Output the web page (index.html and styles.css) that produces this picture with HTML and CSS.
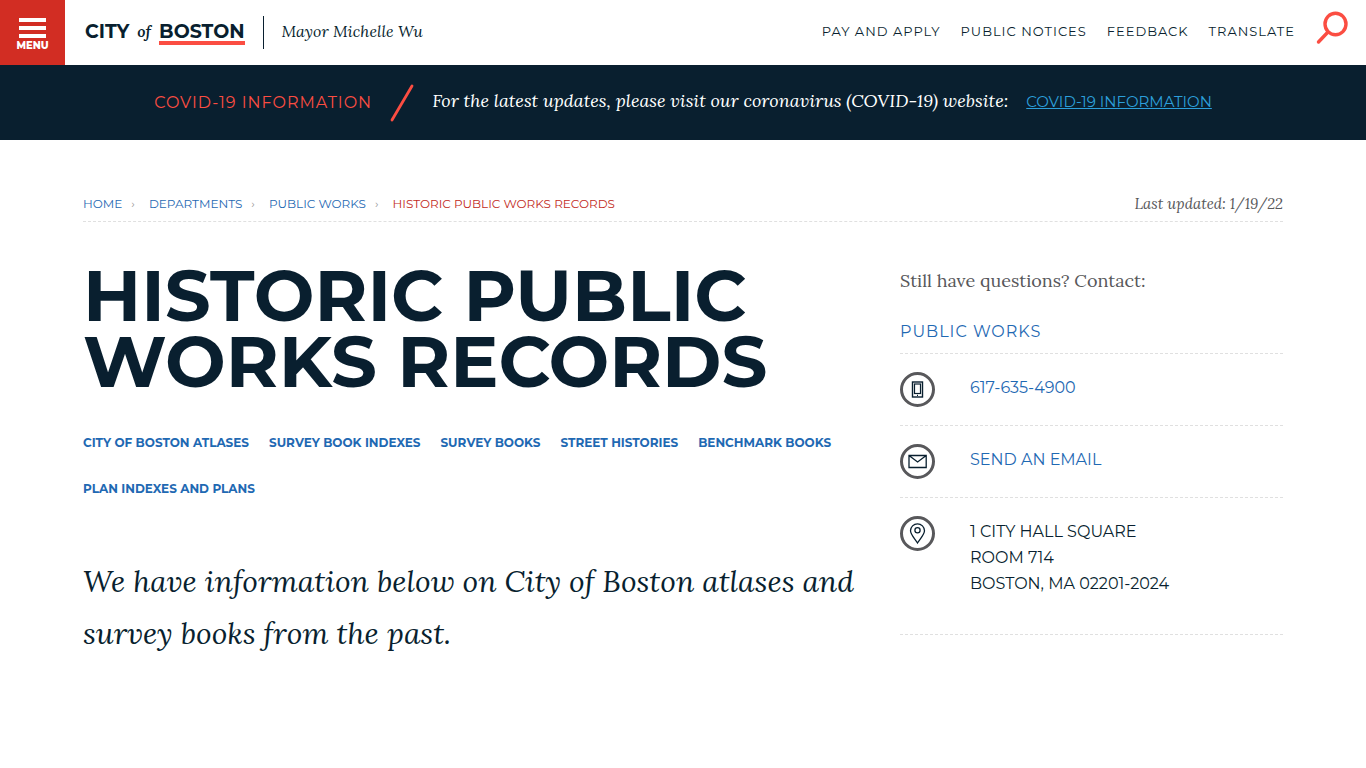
FILE: index.html
```html
<!DOCTYPE html>
<html lang="en">
<head>
<meta charset="utf-8">
<meta name="viewport" content="width=device-width, initial-scale=1">
<title>Historic Public Works Records | Boston.gov</title>
<link rel="stylesheet" href="styles.css">
</head>
<body>
<header class="header">
  <button class="menu" type="button">
    <span class="menu-bar"></span><span class="menu-bar"></span><span class="menu-bar"></span>
    <span class="menu-label">MENU</span>
  </button>
  <a class="logo" href="#"><span>CITY</span><i class="logo-of">of</i><span class="logo-boston">BOSTON</span></a>
  <span class="mayor">Mayor Michelle Wu</span>
  <nav class="topnav" aria-label="Main">
    <a href="#">PAY AND APPLY</a>
    <a href="#">PUBLIC NOTICES</a>
    <a href="#">FEEDBACK</a>
    <a href="#">TRANSLATE</a>
  </nav>
  <button class="search" type="button" aria-label="Search">
    <svg width="34" height="34" viewBox="0 0 34 34" fill="none" stroke="#fb4d42" stroke-linecap="round"><ellipse cx="19.500" cy="13" rx="10.500" ry="10.700" stroke-width="3.400"/><path d="M12 21 2.500 31" stroke-width="3.400"/></svg>
  </button>
</header>

<section class="banner">
  <span class="banner-title">COVID-19 INFORMATION</span>
  <svg class="banner-slash" width="24" height="38" viewBox="0 0 24 38"><path d="M2 36 22 2" stroke="#fb4d42" stroke-width="2.800" stroke-linecap="round"/></svg>
  <span class="banner-text">For the latest updates, please visit our coronavirus (COVID-19) website:</span>
  <a class="banner-link" href="#">COVID-19 INFORMATION</a>
</section>

<main class="page">
  <div class="crumb-row">
    <nav class="crumbs" aria-label="Breadcrumb">
      <a href="#">HOME</a><span class="sep">›</span>
      <a href="#">DEPARTMENTS</a><span class="sep">›</span>
      <a href="#">PUBLIC WORKS</a><span class="sep">›</span>
      <span class="current">HISTORIC PUBLIC WORKS RECORDS</span>
    </nav>
    <span class="updated">Last updated: 1/19/22</span>
  </div>
  <div class="columns">
    <article class="main-col">
      <h1 class="title">HISTORIC PUBLIC WORKS RECORDS</h1>
      <nav class="sections" aria-label="On this page">
        <a href="#">CITY OF BOSTON ATLASES</a>
        <a href="#">SURVEY BOOK INDEXES</a>
        <a href="#">SURVEY BOOKS</a>
        <a href="#">STREET HISTORIES</a>
        <a href="#">BENCHMARK BOOKS</a>
        <a href="#">PLAN INDEXES AND PLANS</a>
      </nav>
      <p class="intro">We have information below on City of Boston atlases and survey books from the past.</p>
    </article>
    <aside class="contact">
      <p class="contact-lead">Still have questions? Contact:</p>
      <a class="contact-dept" href="#">PUBLIC WORKS</a>
      <div class="contact-row">
        <svg class="contact-icon" width="35" height="35" viewBox="0 0 35 35" fill="none"><circle cx="17.500" cy="17.500" r="16" stroke="#58585b" stroke-width="3"/><g stroke="#091f2f"><rect x="12.500" y="10" width="10" height="15" stroke-width="1.400"/><rect x="14.500" y="12" width="6" height="9.500" stroke-width="1.200"/><path d="M17 23.300h1" stroke-width="1.200"/></g></svg>
        <a class="contact-text" href="#">617-635-4900</a>
      </div>
      <div class="contact-row">
        <svg class="contact-icon" width="35" height="35" viewBox="0 0 35 35" fill="none"><circle cx="17.500" cy="17.500" r="16" stroke="#58585b" stroke-width="3"/><path d="M9 11.500h17.200v12H9zM9 11.500l8.600 6.500 8.600-6.500" stroke="#091f2f" stroke-width="1.300"/></svg>
        <a class="contact-text" href="#">SEND AN EMAIL</a>
      </div>
      <div class="contact-row contact-row-last">
        <svg class="contact-icon" width="35" height="35" viewBox="0 0 35 35" fill="none"><circle cx="17.500" cy="17.500" r="16" stroke="#58585b" stroke-width="3"/><g stroke="#091f2f" stroke-width="1.300"><path d="M17.500 27C15 23 10.500 18.500 10.500 14.800a7 7 0 0 1 14 0C24.500 18.500 20 23 17.500 27z"/><circle cx="17.500" cy="14.300" r="2.600"/></g></svg>
        <address class="contact-text">1 CITY HALL SQUARE<br>ROOM 714<br>BOSTON, MA 02201-2024</address>
      </div>
    </aside>
  </div>
</main>
</body>
</html>
```
FILE: styles.css
```css
:root {
  --sans: Montserrat, Inter, sans-serif;
  --serif: Lora, "Liberation Serif", serif;
  --navy: #091f2f;
  --blue: #1f69b3;
  --red: #d22d23;
  --coral: #fb4d42;
  --gray: #58585b;
  --line: 1px dashed #e0e0e0;
}

* { box-sizing: border-box; }

body {
  margin: 0;
  background: #fff;
  color: var(--navy);
  font-family: var(--sans);
  font-size: 16px;
}

a { color: var(--blue); text-decoration: none; }
button { border: 0; padding: 0; cursor: pointer; }

.header { display: flex; align-items: center; min-height: 65px; padding-right: 16px; }
.menu {
  display: flex;
  flex-direction: column;
  align-items: center;
  gap: 4px;
  width: 65px;
  height: 65px;
  padding-top: 18px;
  background: var(--red);
  color: #fff;
}
.menu-bar { width: 27px; height: 4px; background: #fff; }
.menu-label { font: 800 10px/8px var(--sans); }

.logo {
  display: flex;
  align-items: flex-start;
  margin-left: 20px;
  padding-top: 2px;
  color: var(--navy);
  font-size: 19px;
  font-weight: 700;
  line-height: 18px;
}
.logo-of { margin: 0 8px; font: italic 600 16px/17px var(--serif); }
.logo-boston { border-bottom: 4px solid var(--coral); }

.mayor {
  margin-left: 18px;
  padding: 0 0 2px 18px;
  border-left: 1px solid var(--navy);
  font: italic 16px/31px var(--serif);
}

.topnav { display: flex; gap: 20px; margin-left: auto; padding-bottom: 3px; }
.topnav a { color: var(--navy); font-size: 13px; letter-spacing: 1px; line-height: 20px; }
.search { display: flex; margin-left: 21px; margin-bottom: 10px; background: none; }

.banner {
  display: flex;
  align-items: center;
  justify-content: center;
  min-height: 75px;
  background: var(--navy);
  line-height: 24px;
}
.banner-title { color: var(--coral); font-size: 16px; letter-spacing: 1px; }
.banner-slash { margin: 0 18px; }
.banner-text { padding-bottom: 3px; color: #fff; font: italic 18px/24px var(--serif); }
.banner-link { margin-left: 18px; padding-bottom: 2px; color: #2c9fdb; font-size: 15px; text-decoration: underline; }

.page { max-width: 1200px; margin: 0 auto; padding-top: 50px; }

.crumb-row {
  display: flex;
  justify-content: space-between;
  align-items: center;
  padding-bottom: 4px;
  border-bottom: var(--line);
  line-height: 27px;
}
.crumbs { display: flex; font-size: 12px; }
.sep { margin: 0 14px 0 9px; color: #999; }
.current { color: #c22a22; }
.updated { color: var(--gray); font: italic 15px/27px var(--serif); }

.columns { display: grid; grid-template-columns: 817fr 383fr; }
.main-col { padding: 40px 32px 40px 0; }
.title { margin: 0; font-size: 72px; font-weight: 700; line-height: 66px; }

.sections {
  display: flex;
  flex-wrap: wrap;
  gap: 26px 20px;
  margin-top: 39px;
  font-size: 12px;
  font-weight: 700;
  line-height: 20px;
}
.intro { margin: 56px 0 0; font: italic 30px/52px var(--serif); }

.contact { padding-top: 45px; font-size: 16px; line-height: 26px; }
.contact-lead { margin: 0; color: var(--gray); font: 18px/28px var(--serif); }
.contact-dept {
  display: block;
  margin-top: 24px;
  padding-bottom: 8px;
  border-bottom: var(--line);
  letter-spacing: 1px;
}
.contact-row { display: flex; gap: 35px; min-height: 72px; padding-top: 18px; border-bottom: var(--line); }
.contact-row-last { padding-bottom: 37px; }
.contact-icon { flex: none; }
.contact-text { padding-top: 3px; font-style: normal; }
```
